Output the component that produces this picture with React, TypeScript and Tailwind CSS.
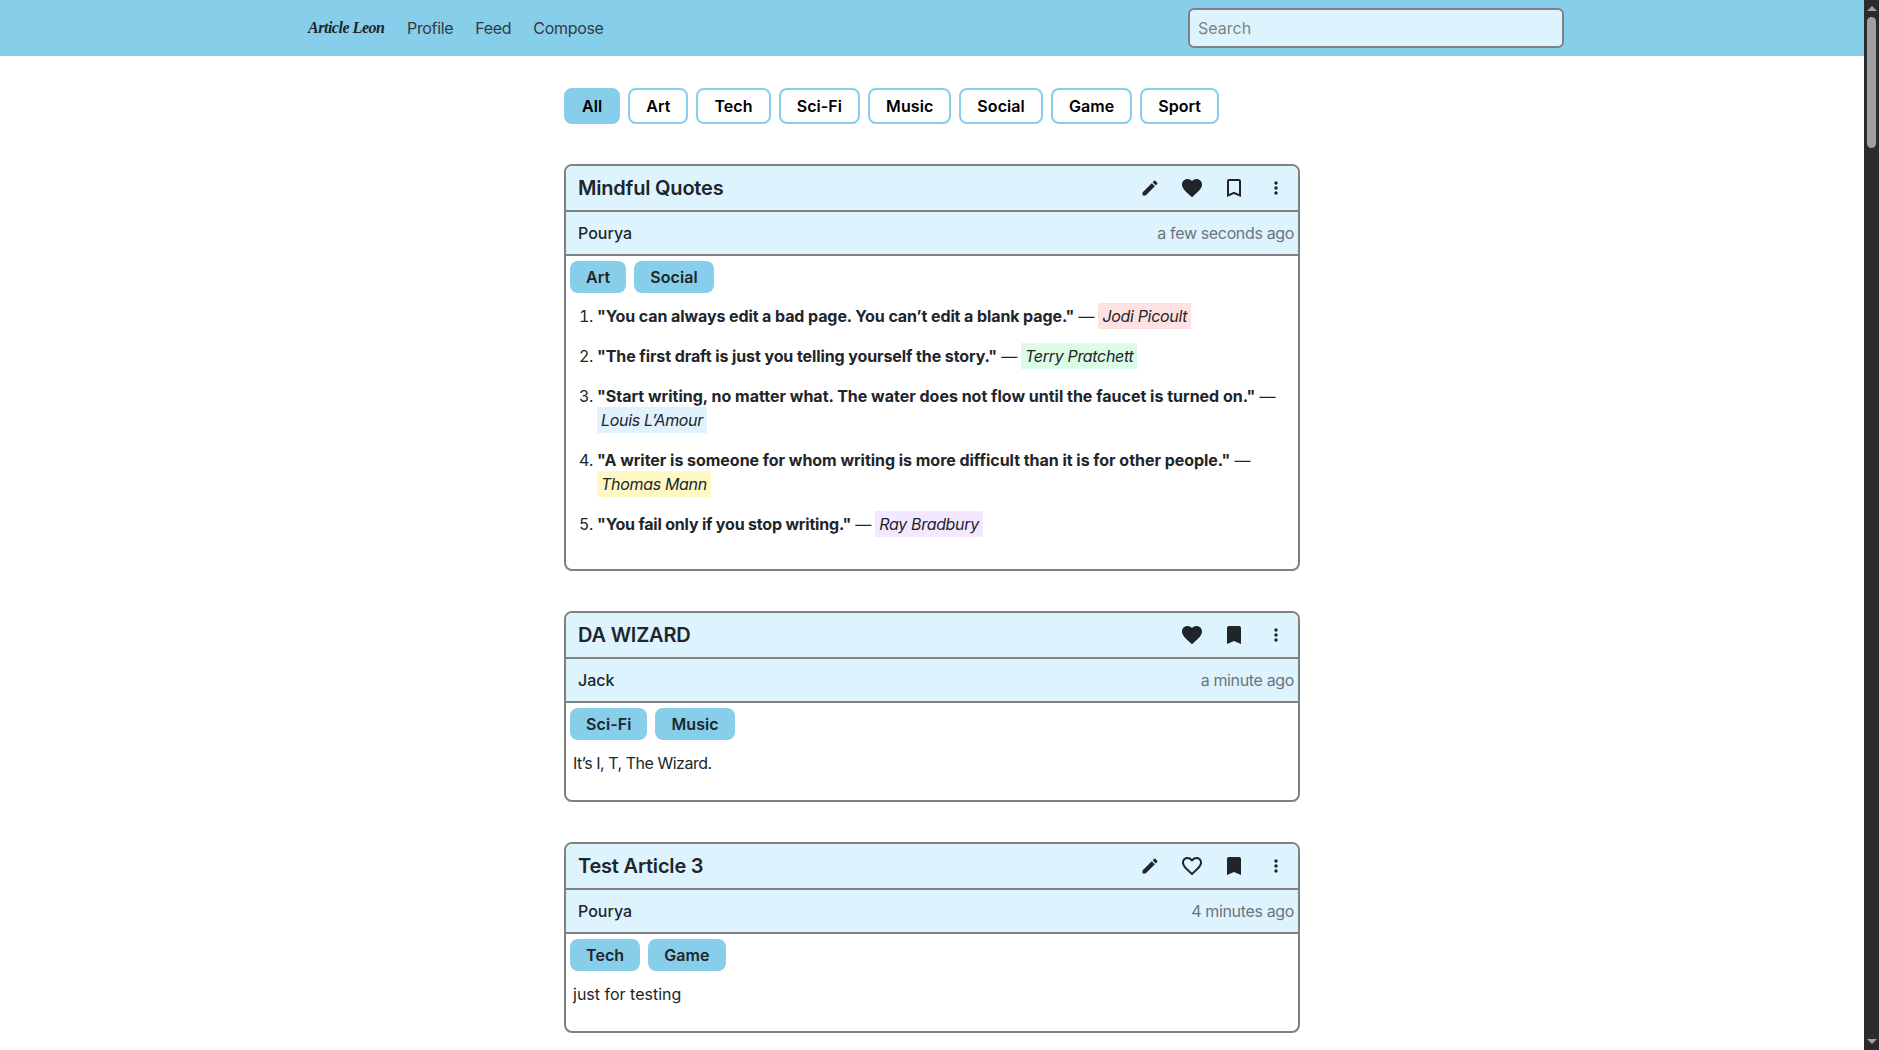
import React from 'react'
import { MdBookmark, MdBookmarkBorder, MdEdit, MdFavorite, MdFavoriteBorder, MdMoreVert } from 'react-icons/md'

const filters = ['All', 'Art', 'Tech', 'Sci-Fi', 'Music', 'Social', 'Game', 'Sport']

type Quote = { text: string; author: string; mark: string; track: string }

const quotes: Quote[] = [
    { text: '"You can always edit a bad page. You can’t edit a blank page."', author: 'Jodi Picoult', mark: 'bg-[#fee2e2]', track: 'tracking-[-0.006em]' },
    { text: '"The first draft is just you telling yourself the story."', author: 'Terry Pratchett', mark: 'bg-[#dcfce7]', track: 'tracking-[-0.006em]' },
    { text: '"Start writing, no matter what. The water does not flow until the faucet is turned on."', author: 'Louis L’Amour', mark: 'bg-[#e0f2fe]', track: 'tracking-normal' },
    { text: '"A writer is someone for whom writing is more difficult than it is for other people."', author: 'Thomas Mann', mark: 'bg-[#fef9c3]', track: 'tracking-[-0.002em]' },
    { text: '"You fail only if you stop writing."', author: 'Ray Bradbury', mark: 'bg-[#f3e8ff]', track: 'tracking-[-0.012em]' },
]

type CardProps = {
    title: string
    author: string
    time: string
    tags: string[]
    editable?: boolean
    liked?: boolean
    saved?: boolean
    children: React.ReactNode
}

const Card: React.FC<CardProps> = ({ title, author, time, tags, editable, liked, saved, children }) => (
    <article className="w-[736px] rounded-lg border-2 border-[#808080] overflow-hidden text-[#212529]">
        <div className="h-[46px] flex items-center justify-between bg-[#ddf4ff] border-b-2 border-[#808080] pl-[12px] pr-[10px]">
            <h2 className="text-[20px] font-semibold tracking-[-0.01em]">{title}</h2>
            <div className="flex items-center gap-[18px]">
                {editable && <MdEdit size={20} className="w-6" />}
                {liked ? <MdFavorite size={24} /> : <MdFavoriteBorder size={24} />}
                {saved ? <MdBookmark size={24} /> : <MdBookmarkBorder size={24} />}
                <MdMoreVert size={20} className="w-6" />
            </div>
        </div>
        <div className="h-[44px] flex items-center justify-between bg-[#ddf4ff] border-b-2 border-[#808080] pl-[12px] pr-[4px]">
            <span className="font-medium">{author}</span>
            <span className="text-[#6c757d] tracking-[-0.022em]">{time}</span>
        </div>
        <div className="flex gap-2 px-[4px] pt-[5px]">
            {tags.map((tag) => (
                <span key={tag} className="h-[32px] px-4 flex items-center rounded-lg bg-[#87ceeb] font-semibold tracking-[0.005em]">
                    {tag}
                </span>
            ))}
        </div>
        <div className="px-[7px] pt-[11px] pb-[25px]">{children}</div>
    </article>
)

const App: React.FC = () => {
    return (
        <div className="h-screen flex overflow-hidden bg-white font-['Inter','Liberation_Sans',sans-serif] text-[16px] leading-6">
            <div className="flex-1 flex flex-col overflow-hidden">
                <nav className="h-[56px] shrink-0 bg-[#87ceeb] flex items-center justify-between pl-[308px] pr-[300px]">
                    <div className="flex items-center gap-[22px] text-[#343a40] tracking-[-0.02em]">
                        <span className="w-[77px] font-['Liberation_Serif',serif] italic font-bold text-[16px] text-[#212529] whitespace-nowrap tracking-[-0.03em]">Article Leon</span>
                        <a>Profile</a>
                        <a>Feed</a>
                        <a>Compose</a>
                    </div>
                    <input
                        placeholder="Search"
                        className="w-[376px] h-[40px] rounded-md border-2 border-[#808080] bg-[#ddf4ff] px-2 placeholder:text-[#808080]"
                    />
                </nav>
                <main className="flex-1 flex flex-col items-center overflow-hidden pt-[32px]">
                    <div className="w-[736px] flex gap-2 mb-[40px]">
                        {filters.map((filter, i) => (
                            <button
                                key={filter}
                                className={
                                    i === 0
                                        ? 'h-[36px] px-4 rounded-lg border-2 border-[#87ceeb] bg-[#87ceeb] font-semibold text-black tracking-[0.005em]'
                                        : 'h-[36px] px-4 rounded-lg border-2 border-[#87ceeb] bg-white font-semibold text-black tracking-[0.005em]'
                                }
                            >
                                {filter}
                            </button>
                        ))}
                    </div>
                    <div className="flex flex-col gap-[40px]">
                        <Card title="Mindful Quotes" author="Pourya" time="a few seconds ago" tags={['Art', 'Social']} editable liked>
                            <ol className="list-decimal pl-6 flex flex-col gap-4 mb-[8px] tracking-[-0.02em]">
                                {quotes.map((q) => (
                                    <li key={q.author}>
                                        <strong className={`font-bold ${q.track}`}>{q.text}</strong> —{' '}
                                        <em className={`${q.mark} px-1 py-[3px]`}>{q.author}</em>
                                    </li>
                                ))}
                            </ol>
                        </Card>
                        <Card title="DA WIZARD" author="Jack" time="a minute ago" tags={['Sci-Fi', 'Music']} liked saved>
                            <p className="tracking-[-0.03em]">It’s I, T, The Wizard.</p>
                        </Card>
                        <Card title="Test Article 3" author="Pourya" time="4 minutes ago" tags={['Tech', 'Game']} editable saved>
                            <p>just for testing</p>
                        </Card>
                    </div>
                </main>
            </div>
            <div className="w-[15px] shrink-0 h-full bg-[#2b2b2b] flex flex-col items-center">
                <div className="mt-[6px] w-0 h-0 border-x-[5px] border-x-transparent border-b-[5px] border-b-[#a0a0a0]" />
                <div className="mt-[6px] w-[9px] h-[131px] rounded-full bg-[#9f9f9f]" />
                <div className="mt-auto mb-[6px] w-0 h-0 border-x-[5px] border-x-transparent border-t-[5px] border-t-[#a0a0a0]" />
            </div>
        </div>
    )
}

export default App
